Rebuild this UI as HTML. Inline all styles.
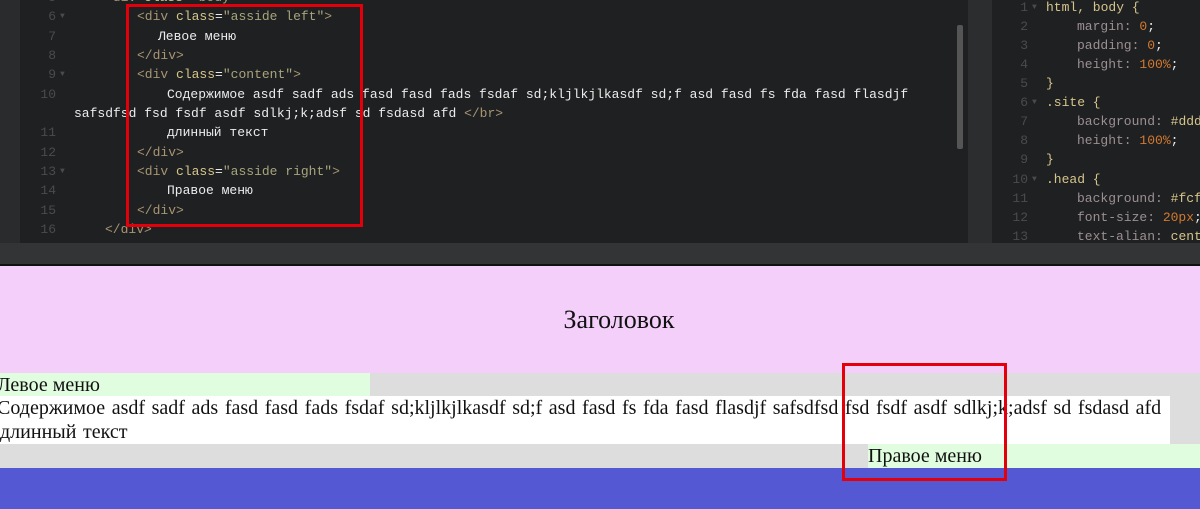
<!DOCTYPE html>
<html><head><meta charset="utf-8"><style>
*{margin:0;padding:0;box-sizing:border-box}
body{width:1200px;height:509px;overflow:hidden;background:#ddd;position:relative}
.ed{position:absolute;left:0;top:0;width:1200px;height:243px;background:#1f2022;overflow:hidden;font-family:"Liberation Mono",monospace;font-size:13px;color:#ececec}
.g1{position:absolute;left:0;top:0;width:20px;height:243px;background:#2a2b2d}
.sep{position:absolute;left:968px;top:0;width:24px;height:243px;background:#2c2d2f}
.ln{position:absolute;white-space:pre;line-height:19px}
.n{position:absolute;white-space:pre;line-height:19px;color:#4a4b4d;text-align:right;width:30px}
.a{position:absolute;line-height:19px;color:#4a4b4d;font-size:8px}
.t{color:#a89572}.c{color:#d6c58b}.s{color:#a8a47c}
.p{color:#9c8f92}.v{color:#d27a30}.k{color:#d6c58b}
.bar{position:absolute;left:0;top:243px;width:1200px;height:21px;background:#333436}
.blk{position:absolute;left:0;top:264px;width:1200px;height:2px;background:#111}
.site{font-family:"Liberation Serif","Noto Serif CJK SC",serif;font-size:20px;color:#111;word-spacing:1.6px}
.head{position:absolute;left:0;top:266px;width:1200px;height:107px;background:#f4cffa;text-align:center;font-size:26px;line-height:108px;word-spacing:0;padding-left:38px}
.l{position:absolute;left:0;top:373px;width:370px;height:23px;background:#e1fde0;line-height:25px;text-indent:-3px;word-spacing:0}
.ct{position:absolute;left:0;top:396px;width:1170px;height:48px;background:#fff;line-height:24px;text-indent:-3px;white-space:nowrap}
.r{position:absolute;left:868px;top:444px;width:332px;height:24px;background:#e1fde0;line-height:25px;word-spacing:0}
.blue{position:absolute;left:0;top:468px;width:1200px;height:41px;background:#5459d3}
.red{position:absolute;border:3px solid #e3000b}
</style></head><body>
<div class="ed">
<div class="g1"></div>
<div class="n" style="left:26px;top:-12px">5</div><div class="ln" style="left:105px;top:-12px"><span class="t">&lt;div</span> <span class="c">class</span>=<span class="s">"body"</span><span class="t">&gt;</span></div>
<div class="n" style="left:26px;top:7px">6</div><div class="a" style="left:60px;top:7px">▼</div><div class="ln" style="left:137px;top:7px"><span class="t">&lt;div</span> <span class="c">class</span>=<span class="s">"asside left"</span><span class="t">&gt;</span></div>
<div class="n" style="left:26px;top:27px">7</div><div class="ln" style="left:158px;top:27px">Левое меню</div>
<div class="n" style="left:26px;top:46px">8</div><div class="ln" style="left:137px;top:46px"><span class="t">&lt;/div&gt;</span></div>
<div class="n" style="left:26px;top:65px">9</div><div class="a" style="left:60px;top:65px">▼</div><div class="ln" style="left:137px;top:65px"><span class="t">&lt;div</span> <span class="c">class</span>=<span class="s">"content"</span><span class="t">&gt;</span></div>
<div class="n" style="left:26px;top:85px">10</div><div class="ln" style="left:167px;top:85px">Содержимое asdf sadf ads fasd fasd fads fsdaf sd;kljlkjlkasdf sd;f asd fasd fs fda fasd flasdjf</div>
<div class="ln" style="left:74px;top:104px">safsdfsd fsd fsdf asdf sdlkj;k;adsf sd fsdasd afd <span class="t">&lt;/br&gt;</span></div>
<div class="n" style="left:26px;top:123px">11</div><div class="ln" style="left:167px;top:123px">длинный текст</div>
<div class="n" style="left:26px;top:143px">12</div><div class="ln" style="left:137px;top:143px"><span class="t">&lt;/div&gt;</span></div>
<div class="n" style="left:26px;top:162px">13</div><div class="a" style="left:60px;top:162px">▼</div><div class="ln" style="left:137px;top:162px"><span class="t">&lt;div</span> <span class="c">class</span>=<span class="s">"asside right"</span><span class="t">&gt;</span></div>
<div class="n" style="left:26px;top:181px">14</div><div class="ln" style="left:167px;top:181px">Правое меню</div>
<div class="n" style="left:26px;top:201px">15</div><div class="ln" style="left:137px;top:201px"><span class="t">&lt;/div&gt;</span></div>
<div class="n" style="left:26px;top:220px">16</div><div class="ln" style="left:105px;top:220px"><span class="t">&lt;/div&gt;</span></div>
<div style="position:absolute;left:957px;top:25px;width:6px;height:124px;background:#555;border-radius:2px"></div>
<div class="sep"></div>
<div class="n" style="left:998px;top:-2px">1</div><div class="a" style="left:1032px;top:-2px">▼</div><div class="ln" style="left:1046px;top:-2px"><span class="k">html, body {</span></div>
<div class="n" style="left:998px;top:17px">2</div><div class="ln" style="left:1077px;top:17px"><span class="p">margin:</span> <span class="v">0</span>;</div>
<div class="n" style="left:998px;top:36px">3</div><div class="ln" style="left:1077px;top:36px"><span class="p">padding:</span> <span class="v">0</span>;</div>
<div class="n" style="left:998px;top:55px">4</div><div class="ln" style="left:1077px;top:55px"><span class="p">height:</span> <span class="v">100%</span>;</div>
<div class="n" style="left:998px;top:74px">5</div><div class="ln" style="left:1046px;top:74px"><span class="k">}</span></div>
<div class="n" style="left:998px;top:93px">6</div><div class="a" style="left:1032px;top:93px">▼</div><div class="ln" style="left:1046px;top:93px"><span class="k">.site {</span></div>
<div class="n" style="left:998px;top:112px">7</div><div class="ln" style="left:1077px;top:112px"><span class="p">background:</span> <span class="k">#ddd</span></div>
<div class="n" style="left:998px;top:131px">8</div><div class="ln" style="left:1077px;top:131px"><span class="p">height:</span> <span class="v">100%</span>;</div>
<div class="n" style="left:998px;top:150px">9</div><div class="ln" style="left:1046px;top:150px"><span class="k">}</span></div>
<div class="n" style="left:998px;top:170px">10</div><div class="a" style="left:1032px;top:170px">▼</div><div class="ln" style="left:1046px;top:170px"><span class="k">.head {</span></div>
<div class="n" style="left:998px;top:189px">11</div><div class="ln" style="left:1077px;top:189px"><span class="p">background:</span> <span class="k">#fcf</span></div>
<div class="n" style="left:998px;top:208px">12</div><div class="ln" style="left:1077px;top:208px"><span class="p">font-size:</span> <span class="v">20px</span>;</div>
<div class="n" style="left:998px;top:227px">13</div><div class="ln" style="left:1077px;top:227px"><span class="p">text-alian:</span> <span class="k">cent</span></div>
</div>
<div class="bar"></div>
<div class="blk"></div>
<div class="site">
<div class="head">Заголовок</div>
<div class="l">Левое меню</div>
<div class="ct">Содержимое asdf sadf ads fasd fasd fads fsdaf sd;kljlkjlkasdf sd;f asd fasd fs fda fasd flasdjf safsdfsd fsd fsdf asdf sdlkj;k;adsf sd fsdasd afd<br>длинный текст</div>
<div class="r">Правое меню</div>
<div class="blue"></div>
</div>
<div class="red" style="left:126px;top:4px;width:237px;height:223px"></div>
<div class="red" style="left:842px;top:363px;width:165px;height:118px"></div>
</body></html>
